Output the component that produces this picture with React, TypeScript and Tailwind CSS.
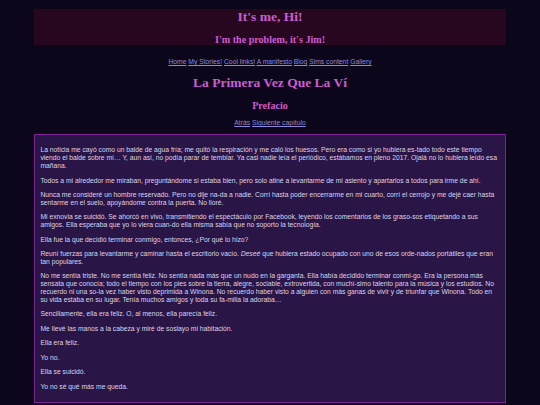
import React from "react";

const serif = { fontFamily: '"Liberation Serif", "Times New Roman", serif' };

export default function App() {
  const link = "text-[#8c88dc] underline";
  const paras: React.ReactNode[] = [
    "La noticia me cayó como un balde de agua fría; me quitó la respiración y me caló los huesos. Pero era como si yo hubiera es-tado todo este tiempo viendo el balde sobre mí… Y, aun así, no podía parar de temblar. Ya casi nadie leía el periódico, estábamos en pleno 2017. Ojalá no lo hubiera leído esa mañana.",
    "Todos a mi alrededor me miraban, preguntándome si estaba bien, pero solo atiné a levantarme de mi asiento y apartarlos a todos para irme de ahí.",
    "Nunca me consideré un hombre reservado. Pero no dije na-da a nadie. Corrí hasta poder encerrarme en mi cuarto, corrí el cerrojo y me dejé caer hasta sentarme en el suelo, apoyándome contra la puerta. No lloré.",
    "Mi exnovia se suicidó. Se ahorcó en vivo, transmitiendo el espectáculo por Facebook, leyendo los comentarios de los graso-sos etiquetando a sus amigos. Ella esperaba que yo lo viera cuan-do ella misma sabía que no soporto la tecnología.",
    "Ella fue la que decidió terminar conmigo, entonces, ¿Por qué lo hizo?",
    <>
      Reuní fuerzas para levantarme y caminar hasta el escritorio vacío. <i>Deseé</i> que hubiera estado ocupado con uno de esos orde-nados portátiles que eran tan populares.
    </>,
    "No me sentía triste. No me sentía feliz. No sentía nada más que un nudo en la garganta. Ella había decidido terminar conmi-go. Era la persona más sensata que conocía; todo el tiempo con los pies sobre la tierra, alegre, sociable, extrovertida, con muchí-simo talento para la música y los estudios. No recuerdo ni una so-la vez haber visto deprimida a Winona. No recuerdo haber visto a alguien con más ganas de vivir y de triunfar que Winona. Todo en su vida estaba en su lugar. Tenía muchos amigos y toda su fa-milia la adoraba…",
    "Sencillamente, ella era feliz. O, al menos, ella parecía feliz.",
    "Me llevé las manos a la cabeza y miré de soslayo mi habitación.",
    "Ella era feliz.",
    "Yo no.",
    "Ella se suicidó.",
    "Yo no sé qué más me queda.",
  ];
  return (
    <div
      className="min-h-[405px] bg-[#0b0619] pt-[9px] pb-[2px]"
      style={{ fontFamily: '"Liberation Sans", Arial, sans-serif' }}
    >
      <div className="w-[472px] mx-auto">
        <div className="bg-[#26071f] flex flex-col items-center text-[#cc5cd2] font-bold" style={serif}>
          <div className="text-[13.5px] leading-[15.5px] h-[15.5px]">It's me, Hi!</div>
          <div className="text-[10.1px] leading-[11.6px] h-[11.6px] mt-[9px]">I'm the problem, it's Jim!</div>
        </div>
        <div className="mt-[13px] text-center text-[6.75px] leading-[7.76px]">
          <a className={link}>Home</a> <a className={link}>My Stories!</a>{" "}
          <a className={link}>Cool links!</a> <a className={link}>A manifesto</a>{" "}
          <a className={link}>Blog</a> <a className={link}>Sims content</a>{" "}
          <a className={link}>Gallery</a>
        </div>
        <div
          className="mt-[9.5px] text-center font-bold text-[#cc5cd2] text-[13.5px] leading-[15.5px]"
          style={serif}
        >
          La Primera Vez Que La Ví
        </div>
        <div
          className="mt-[9px] text-center font-bold text-[#cc5cd2] text-[10.1px] leading-[11.6px]"
          style={serif}
        >
          Prefacio
        </div>
        <div className="mt-[7.5px] text-center text-[6.75px] leading-[7.76px]">
          <a className={link}>Atrás</a> <a className={link}>Siguiente capítulo</a>
        </div>
        <div className="mt-[7px] border-[1.3px] border-[#7d2394] bg-[#2a1646] px-[5.4px] py-[11.75px] flex flex-col gap-[6.75px] text-[#dcd2ea] text-[6.75px] leading-[7.76px]">
          {paras.map((p, i) => (
            <p key={i}>{p}</p>
          ))}
        </div>
      </div>
    </div>
  );
}
